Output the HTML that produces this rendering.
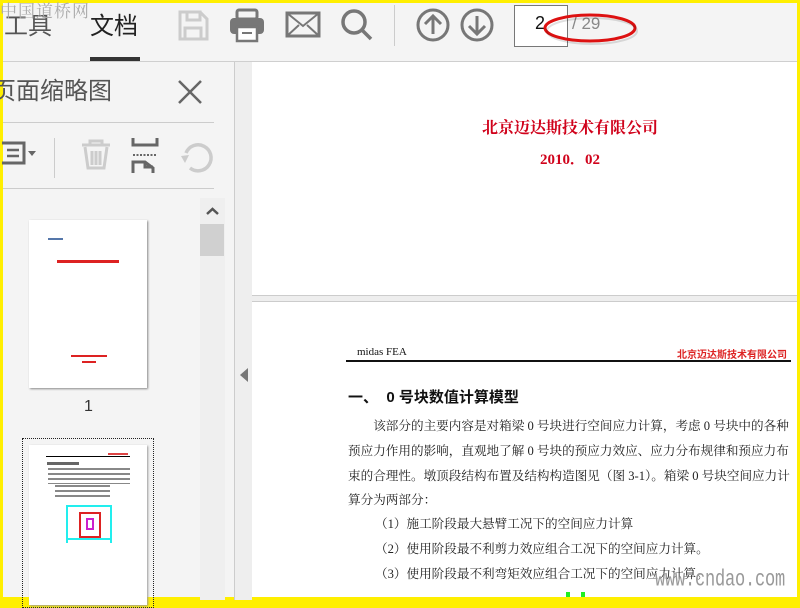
<!DOCTYPE html>
<html><head><meta charset="utf-8"><style>
*{margin:0;padding:0;box-sizing:border-box}
body{width:800px;height:600px;overflow:hidden;background:#ffef00;position:relative;font-family:"Liberation Sans","Noto Sans CJK SC",sans-serif}
.a{position:absolute}
.serif{font-family:"Liberation Serif","Noto Serif CJK SC",serif}
.p{position:absolute;left:348px;font-family:"Liberation Serif","Noto Serif CJK SC",serif;font-size:12.6px;color:#222;white-space:nowrap;line-height:18px}
</style></head><body>
<div class="a" style="left:3px;top:3px;width:794px;height:594px;background:#f4f4f4;overflow:hidden">
</div>
<!-- toolbar -->
<div class="a" style="left:3px;top:61px;width:794px;height:1px;background:#cfcfcf"></div>
<div class="a" style="left:4px;top:12px;font-size:24px;color:#555;line-height:30px">工具</div>
<div class="a" style="left:90px;top:12px;font-size:24px;color:#222;line-height:30px">文档</div>
<div class="a" style="left:90px;top:57px;width:50px;height:4px;background:#333"></div>
<div class="a" style="left:0px;top:-3px;font-size:17px;color:#aaa;letter-spacing:1px;font-family:'Noto Serif CJK SC',serif">中国道桥网</div>
<svg class="a" style="left:170px;top:0" width="230" height="60">
<g fill="none" stroke="#ccc" stroke-width="3"><path d="M10 12h20l7 7v20H10z"/><rect x="17" y="12" width="13" height="8"/><rect x="15" y="28" width="16" height="11"/></g>
<g fill="#777"><rect x="67" y="10" width="20" height="9" rx="2" fill="none" stroke="#777" stroke-width="3"/><rect x="60" y="18" width="34" height="16" rx="4"/><rect x="67" y="27" width="20" height="14" fill="#fff" stroke="#777" stroke-width="2.5"/><rect x="72" y="32" width="10" height="2"/></g>
<g fill="none" stroke="#777" stroke-width="3"><rect x="117" y="13" width="32" height="23"/><path d="M117 13l16 13 16-13M117 36l12-11M149 36l-12-11" stroke-width="2"/></g>
<g fill="none" stroke="#777" stroke-width="3.5"><circle cx="184" cy="22" r="11"/><path d="M192 30l9 9"/></g>
<rect x="224" y="5" width="1" height="41" fill="#ccc"/>
</svg>
<svg class="a" style="left:412px;top:4px" width="90" height="44">
<g fill="none" stroke="#777" stroke-width="3"><circle cx="21" cy="21" r="15"/><path d="M21 30V12M13 20l8-8 8 8"/><circle cx="65" cy="21" r="15"/><path d="M65 12v18M57 22l8 8 8-8"/></g>
</svg>
<div class="a" style="left:514px;top:5px;width:54px;height:42px;background:#fff;border:1px solid #777"></div>
<div class="a" style="left:535px;top:13px;font-size:18px;color:#111">2</div>
<div class="a" style="left:572px;top:14px;font-size:17px;color:#888">/ 29</div>
<svg class="a" style="left:540px;top:10px" width="100" height="40"><ellipse cx="50" cy="18" rx="45" ry="13" fill="none" stroke="#d11" stroke-width="3"/><ellipse cx="52" cy="21" rx="45" ry="13" fill="none" stroke="rgba(0,0,0,.12)" stroke-width="2"/></svg>
<!-- left panel -->
<div class="a" style="left:-8px;top:76px;font-size:24px;color:#555;line-height:32px">页面缩略图</div>
<svg class="a" style="left:176px;top:78px" width="28" height="28"><path d="M3 3l22 22M25 3L3 25" stroke="#666" stroke-width="2.5"/></svg>
<div class="a" style="left:3px;top:122px;width:211px;height:1px;background:#ccc"></div>
<div class="a" style="left:3px;top:188px;width:211px;height:1px;background:#ccc"></div>
<svg class="a" style="left:0;top:130px" width="230" height="55">
<g fill="none" stroke="#666" stroke-width="3"><path d="M2 13h22v20H2"/><path d="M7 20h12M7 26h12" stroke-width="2.5"/></g><path d="M28 21h8l-4 5z" fill="#666"/>
<rect x="54" y="8" width="1" height="40" fill="#ccc"/>
<g fill="none" stroke="#ccc" stroke-width="3"><path d="M82 15h28M90 15v-4h12v4M85 17l3 21h16l3-21M92 21v14M96 21v14M100 21v14"/></g>
<g fill="none" stroke="#666" stroke-width="3"><path d="M133 8v7h24V8M133 43v-11h12l8 6v5M145 32v5h8"/></g><path d="M133 25h24" stroke="#666" stroke-width="2" stroke-dasharray="2 1.5"/>
<g fill="none" stroke="#ccc" stroke-width="3.5"><path d="M190 38a13 13 0 1 0-4-15"/></g><path d="M181 26l8-1-4 8z" fill="#ccc"/>
</svg>
<div class="a" style="left:200px;top:198px;width:25px;height:402px;background:#efefef"></div>
<svg class="a" style="left:205px;top:205px" width="15" height="12"><path d="M2 9l5.5-5 5.5 5" stroke="#555" stroke-width="2.5" fill="none"/></svg>
<div class="a" style="left:200px;top:224px;width:24px;height:32px;background:#d0d0d0"></div>
<div class="a" style="left:29px;top:220px;width:118px;height:168px;background:#fff;box-shadow:1px 1px 2px #888"></div>
<div class="a" style="left:48px;top:238px;width:15px;height:2px;background:#57a"></div>
<div class="a" style="left:57px;top:260px;width:62px;height:3px;background:#d22"></div>
<div class="a" style="left:71px;top:355px;width:36px;height:2px;background:#d22"></div>
<div class="a" style="left:82px;top:361px;width:14px;height:2px;background:#d22"></div>
<div class="a" style="left:84px;top:398px;font-size:16px;color:#333">1</div>
<div class="a" style="left:22px;top:438px;width:132px;height:170px;border:1px dotted #222"></div>
<div class="a" style="left:29px;top:445px;width:118px;height:160px;background:#fff;box-shadow:1px 1px 2px #999"></div>
<div class="a" style="left:46px;top:456px;width:84px;height:1px;background:#000"></div>
<div class="a" style="left:108px;top:453px;width:20px;height:2px;background:#d44"></div>
<div class="a" style="left:47px;top:462px;width:32px;height:3px;background:#666"></div>
<div class="a" style="left:48px;top:468px;width:82px;height:16px;background:repeating-linear-gradient(#888 0 2px,transparent 2px 5px)"></div>
<div class="a" style="left:55px;top:485px;width:55px;height:12px;background:repeating-linear-gradient(#888 0 2px,transparent 2px 5px)"></div>
<div class="a" style="left:66px;top:505px;width:46px;height:38px;border:2px solid #2ee;border-bottom:none"></div>
<div class="a" style="left:79px;top:512px;width:22px;height:26px;border:2px solid #d22"></div>
<div class="a" style="left:86px;top:518px;width:8px;height:12px;border:2px solid #c2c"></div>
<div class="a" style="left:66px;top:538px;width:46px;height:2px;background:#2ee"></div>
<!-- divider + side column -->
<div class="a" style="left:234px;top:62px;width:1px;height:538px;background:#ccc"></div>
<div class="a" style="left:235px;top:62px;width:17px;height:538px;background:#eee"></div>
<svg class="a" style="left:238px;top:366px" width="12" height="18"><path d="M10 2v14L2 9z" fill="#777"/></svg>
<!-- document -->
<div class="a" style="left:252px;top:62px;width:545px;height:233px;background:#fff"></div>
<div class="a" style="left:252px;top:295px;width:545px;height:7px;background:#eee;border-top:1px solid #ccc;border-bottom:1px solid #ccc"></div>
<div class="a" style="left:252px;top:302px;width:545px;height:295px;background:#fff;overflow:hidden"></div>
<div class="a serif" style="left:470px;top:115px;width:200px;text-align:center;font-size:16px;font-weight:bold;color:#d0021b">北京迈达斯技术有限公司</div>
<div class="a serif" style="left:520px;top:148px;width:100px;text-align:center;font-size:15px;font-weight:bold;color:#d0021b">2010．02</div>
<div class="a serif" style="left:357px;top:346px;font-size:11px;color:#111">midas FEA</div>
<div class="a" style="left:677px;top:346px;font-size:10px;color:#d22;font-weight:bold;font-family:'Noto Sans CJK SC',sans-serif;white-space:nowrap">北京迈达斯技术有限公司</div>
<div class="a" style="left:346px;top:360px;width:445px;height:2px;background:#111"></div>
<div class="a" style="left:348px;top:386px;font-size:15px;font-weight:bold;color:#111;white-space:nowrap">一、&nbsp;&nbsp;0 号块数值计算模型</div>
<div class="p" style="top:417px">&emsp;&emsp;该部分的主要内容是对箱梁 0 号块进行空间应力计算，考虑 0 号块中的各种</div>
<div class="p" style="top:442px">预应力作用的影响，直观地了解 0 号块的预应力效应、应力分布规律和预应力布</div>
<div class="p" style="top:467px">束的合理性。墩顶段结构布置及结构构造图见（图 3-1）。箱梁 0 号块空间应力计</div>
<div class="p" style="top:491px">算分为两部分：</div>
<div class="p" style="top:515px;left:375px">（1）施工阶段最大悬臂工况下的空间应力计算</div>
<div class="p" style="top:540px;left:375px">（2）使用阶段最不利剪力效应组合工况下的空间应力计算。</div>
<div class="p" style="top:565px;left:375px">（3）使用阶段最不利弯矩效应组合工况下的空间应力计算。</div>
<div class="a" style="left:655px;top:568px;font-family:'Liberation Mono',monospace;font-size:17px;color:#999;transform:scaleY(1.35);transform-origin:0 0;letter-spacing:-0.2px">www.cndao.com</div>
<div class="a" style="left:566px;top:592px;width:4px;height:5px;background:#2e2"></div>
<div class="a" style="left:581px;top:592px;width:4px;height:5px;background:#2e2"></div>
</body></html>
